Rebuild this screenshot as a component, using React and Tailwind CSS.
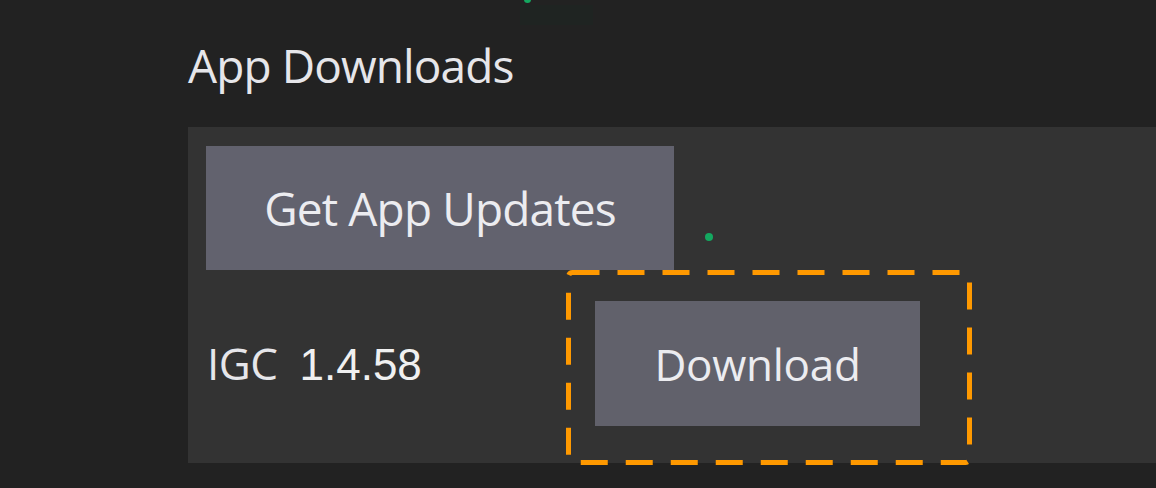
function DashedFrame() {
  return (
    <svg
      className="absolute left-[-29px] top-[-31px] pointer-events-none"
      width="407"
      height="196"
      viewBox="0 0 407 196"
    >
      <rect
        x="2.5"
        y="2.5"
        width="401"
        height="190"
        rx="4"
        fill="none"
        stroke="#ff9900"
        strokeWidth="5"
        strokeDasharray="27 18"
      />
    </svg>
  );
}

export default function App() {
  return (
    <main
      className="relative w-[1156px] h-[488px] overflow-hidden bg-[#222222] pl-[188px] pt-[37px] text-[#e6e6ea]"
      style={{ fontFamily: '"Open Sans", "Noto Sans", sans-serif' }}
    >
      <div className="absolute left-[524px] top-[-4px] w-[7px] h-[7px] rounded-full bg-[#14a860]" />
      <div className="absolute left-[520px] top-[5px] w-[73px] h-[20px] bg-[#1f2422]" />

      <h1 className="text-[46px] leading-[56px] h-[56px] mb-[34px] font-normal tracking-[-0.9px]">
        App Downloads
      </h1>

      <section className="bg-[#333333] h-[336px] pl-[18px] pt-[19px] pb-[37px]">
        <div className="flex items-start">
          <button className="w-[468px] h-[124px] bg-[#62626e] flex items-center justify-center text-[46px] tracking-[-0.85px] text-[#ececf0]">
            Get App Updates
          </button>
          <span className="ml-[31px] mt-[87px] w-[8px] h-[8px] rounded-full bg-[#14a860]" />
        </div>

        <div className="flex items-center mt-[31px]">
          <div className="flex items-baseline w-[389px] pl-[1px]">
            <span className="text-[44px] tracking-[-0.5px]">IGC</span>
            <span
              className="ml-[22px] text-[44px] text-[#f0f0f0]"
              style={{ fontFamily: '"Liberation Sans", Arial, sans-serif' }}
            >
              1.4.58
            </span>
          </div>
          <div className="relative">
            <button className="w-[325px] h-[125px] bg-[#61616b] flex items-center justify-center text-[44px] tracking-[-0.3px] text-[#ececf0]">
              Download
            </button>
            <DashedFrame />
          </div>
        </div>
      </section>
    </main>
  );
}
